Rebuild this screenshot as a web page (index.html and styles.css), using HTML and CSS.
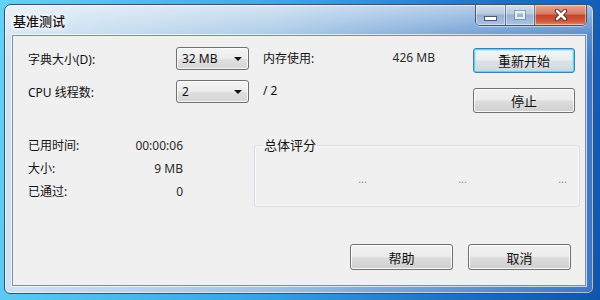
FILE: index.html
```html
<!DOCTYPE html>
<html lang="zh-CN">
<head>
<meta charset="utf-8">
<title>基准测试</title>
<link rel="stylesheet" href="styles.css">
</head>
<body>
<div class="window">
  <div class="titlebar">
    <div class="title">基准测试</div>
    <div class="caption">
      <div class="cbtn min"><span class="min-bar"></span></div>
      <div class="cbtn max"><span class="max-box"></span></div>
      <div class="cbtn close">
        <svg width="14" height="12" viewBox="0 0 14 12"><path d="M3 2 L11 10 M11 2 L3 10" stroke="#3a1a14" stroke-width="4.2" stroke-linecap="round"/><path d="M3 2 L11 10 M11 2 L3 10" stroke="#fff" stroke-width="2.6" stroke-linecap="round"/></svg>
      </div>
    </div>
  </div>
  <div class="client">
    <div class="top">
      <div class="settings">
        <div class="label">字典大小(D):</div>
        <div class="combo"><span>32 MB</span><span class="arrow"></span></div>
        <div class="mem"><span>内存使用:</span><span class="val">426 MB</span></div>
        <div class="label">CPU 线程数:</div>
        <div class="combo"><span>2</span><span class="arrow"></span></div>
        <div class="mem"><span>/ 2</span></div>
      </div>
      <div class="actions">
        <div class="btn default">重新开始</div>
        <div class="btn">停止</div>
      </div>
    </div>
    <div class="middle">
      <div class="stats">
        <div class="stat"><span>已用时间:</span><span class="val">00:00:06</span></div>
        <div class="stat"><span>大小:</span><span class="val">9 MB</span></div>
        <div class="stat"><span>已通过:</span><span class="val">0</span></div>
      </div>
      <fieldset class="group">
        <legend>总体评分</legend>
        <div class="dots"><span>...</span><span>...</span><span>...</span></div>
      </fieldset>
    </div>
    <div class="bottom">
      <div class="btn wide">帮助</div>
      <div class="btn wide">取消</div>
    </div>
  </div>
</div>
</body>
</html>
```

FILE: styles.css
```css
* { box-sizing: border-box; }
html, body { margin: 0; }
body {
  width: 600px;
  height: 300px;
  overflow: hidden;
  padding: 4px 6px 6px 4px;
  background: linear-gradient(100deg, #62d2f6 0%, #3aa6e6 45%, #1a6cc4 80%, #0f55ae 100%);
  font-family: "Noto Sans", "Noto Sans CJK SC", sans-serif;
  font-size: 12px;
  color: #111;
}
.window {
  width: 590px;
  height: 290px;
  display: flex;
  flex-direction: column;
  border: 1px solid #39506a;
  border-radius: 7px 7px 6px 6px;
  padding: 0 7px 7px 7px;
  background:
    linear-gradient(to bottom, rgba(255,255,255,0.55) 0, rgba(255,255,255,0.15) 30px, rgba(255,255,255,0) 60px),
    linear-gradient(to right, rgba(214,228,242,0.95) 0%, rgba(170,198,228,0.9) 45%, rgba(95,145,205,0.85) 85%, rgba(70,125,200,0.85) 100%);
  box-shadow: inset 0 0 0 1px rgba(255,255,255,0.55);
}
.titlebar {
  height: 30px;
  flex: none;
  display: flex;
  justify-content: space-between;
  align-items: flex-start;
}
.title {
  margin: 7px 0 0 1px;
  font-size: 13px;
  line-height: 18px;
  font-weight: 500;
  color: #111;
  text-shadow: 0 0 6px #fff, 0 0 6px #fff, 0 0 3px #fff;
}
.caption {
  display: flex;
  margin-right: -1px;
  border: 1px solid rgba(40,55,75,0.75);
  border-top: none;
  border-radius: 0 0 5px 5px;
  overflow: hidden;
  height: 21px;
  box-shadow: 0 1px 0 rgba(255,255,255,0.5);
}
.cbtn {
  height: 20px;
  display: flex;
  align-items: center;
  justify-content: center;
  box-shadow: inset 0 0 0 1px rgba(255,255,255,0.45);
}
.min, .max {
  width: 30px;
  background: linear-gradient(to bottom, #d4e0ee 0%, #b7cbe1 45%, #96b1d2 50%, #a9c3e2 100%);
  border-right: 1px solid rgba(40,55,75,0.55);
}
.max { width: 29px; }
.min-bar {
  width: 11px;
  height: 3px;
  margin-top: 7px;
  background: #fff;
  border: 1px solid #4a5a6e;
  box-sizing: content-box;
}
.max-box {
  width: 10px;
  height: 8px;
  border: 2px solid #e9f0f8;
  outline: 1px solid rgba(90,110,140,0.5);
}
.close {
  width: 51px;
  background: linear-gradient(to bottom, #e8a493 0%, #d77c64 45%, #c4452b 50%, #d0563a 80%, #e08a6c 100%);
}
.client {
  flex: 1;
  display: flex;
  flex-direction: column;
  background: #f0f0f0;
  border: 1px solid #7d8ea3;
  box-shadow: 0 0 0 1px rgba(255,255,255,0.7);
}
.top {
  display: flex;
  margin: 11px 0 0 15px;
}
.settings {
  display: grid;
  grid-template-columns: 148px 73px 224px;
  grid-template-rows: 23px 23px;
  row-gap: 10px;
  align-items: center;
}
.combo {
  height: 23px;
  display: flex;
  align-items: center;
  justify-content: space-between;
  padding: 0 6px 0 5px;
  border: 1px solid #707070;
  border-radius: 3px;
  background: linear-gradient(to bottom, #f4f4f4 0%, #ececec 50%, #e0e0e0 51%, #d6d6d6 100%);
  box-shadow: inset 0 0 0 1px rgba(255,255,255,0.8);
  color: #111;
}
.arrow {
  width: 0;
  height: 0;
  border-left: 4px solid transparent;
  border-right: 4px solid transparent;
  border-top: 4px solid #111;
  margin-top: 1px;
}
.mem {
  display: flex;
  justify-content: space-between;
  padding: 0 38px 0 14px;
  margin-top: -2px;
}
.val { color: #2b2b2b; }
.actions {
  display: flex;
  flex-direction: column;
  gap: 15px;
  margin-top: 1px;
}
.btn {
  width: 102px;
  height: 25px;
  display: flex;
  align-items: center;
  justify-content: center;
  font-size: 13px;
  color: #111;
  border: 1px solid #707070;
  border-radius: 3px;
  background: linear-gradient(to bottom, #f2f2f2 0%, #ebebeb 48%, #dddddd 52%, #cfcfcf 100%);
  box-shadow: inset 0 0 0 1px rgba(255,255,255,0.85);
}
.btn.default {
  border-color: #3c7fb1;
  background: linear-gradient(to bottom, #f4f6f8 0%, #e9edf0 48%, #dde2e6 52%, #d0d6db 100%);
  box-shadow: inset 0 0 0 1px #5fd0f6, inset 0 0 0 2px rgba(160,230,250,0.6);
}
.btn.wide { width: 103px; height: 26px; }
.middle {
  display: flex;
  align-items: flex-start;
  margin: 21px 0 0 15px;
}
.stats {
  width: 155px;
  margin-right: 71px;
}
.stat {
  display: flex;
  justify-content: space-between;
  line-height: 23px;
  height: 23px;
}
.group {
  width: 326px;
  margin: 3px 0 0 0;
  padding: 0 12px 19px 8px;
  border: 1px solid #d5dde3;
  border-radius: 3px;
  box-shadow: inset 0 0 0 1px #fafbfc;
}
.group legend {
  padding: 0 1px;
  font-size: 13px;
  line-height: 16px;
  color: #111;
}
.dots {
  display: grid;
  grid-template-columns: 100px 100px 100px;
  padding: 18px 0 0 4px;
  line-height: 16px;
  font-size: 11px;
  color: #8d88a4;
  text-align: right;
}
.bottom {
  margin-top: auto;
  display: flex;
  justify-content: flex-end;
  gap: 15px;
  padding: 0 14px 15px 0;
}
```
